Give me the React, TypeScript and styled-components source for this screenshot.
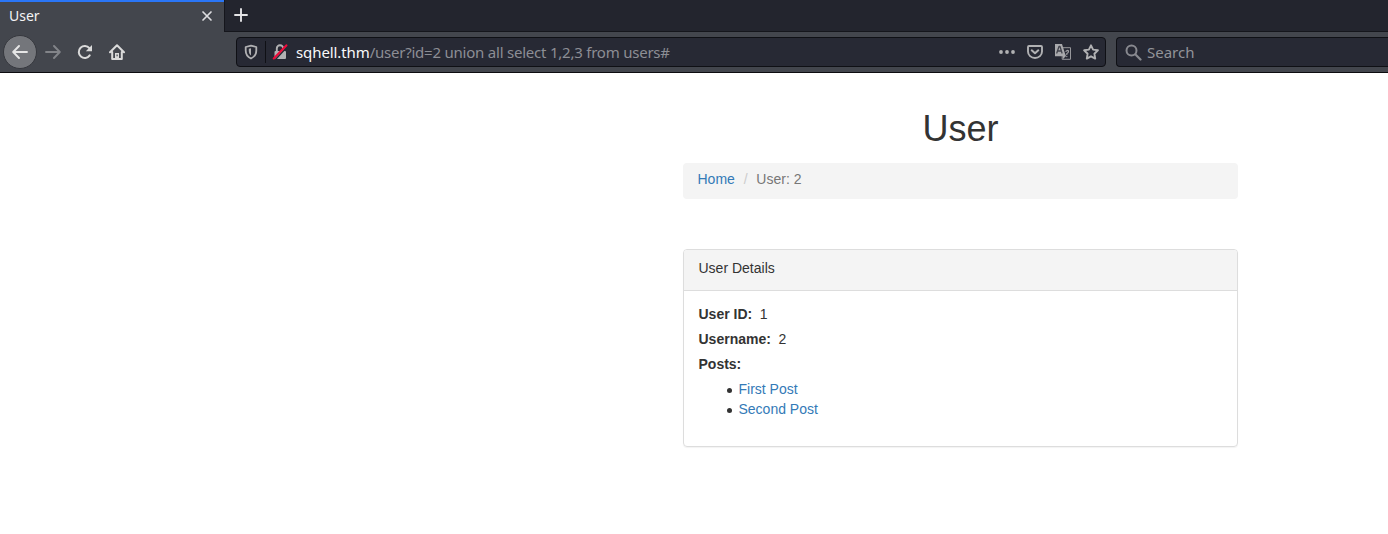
import React from "react";
import styled, { createGlobalStyle } from "styled-components";

const GlobalStyle = createGlobalStyle`
  * { box-sizing: border-box; }
  body { margin: 0; background: #fff; overflow: hidden; }
`;

const Window = styled.div`
  width: 100%;
  height: 534px;
  display: flex;
  flex-direction: column;
  background: #fff;
`;

const TabStrip = styled.div`
  height: 32px;
  flex: none;
  display: flex;
  background: #23252e;
  font-family: "Noto Sans", sans-serif;
`;

const Tab = styled.div`
  width: 224px;
  height: 32px;
  display: flex;
  align-items: center;
  justify-content: space-between;
  padding: 0 11px 2px 9px;
  border-top: 2px solid #2a76f6;
  background: #43464d;
  color: #f4f4f5;
  font-size: 14px;
  line-height: 28px;
`;

const NewTab = styled.div`
  flex: 1;
  display: flex;
  align-items: flex-start;
  padding: 8px 0 0 9px;
  border-left: 1px solid #15161c;
  border-bottom: 1px solid #15161c;
`;

const Toolbar = styled.div`
  height: 41px;
  flex: none;
  display: flex;
  align-items: flex-start;
  background: #43464d;
  border-bottom: 1px solid #0c0c0f;
  font-family: "Noto Sans", sans-serif;
  font-size: 15px;
`;

const NavButtons = styled.div`
  width: 236px;
  height: 40px;
  display: flex;
  align-items: center;
  padding-left: 3px;
`;

const NavButton = styled.div<{ $round?: boolean }>`
  width: ${(p) => (p.$round ? 34 : 32)}px;
  height: ${(p) => (p.$round ? 34 : 32)}px;
  display: flex;
  align-items: center;
  justify-content: center;
  border-radius: 50%;
  border: 1px solid ${(p) => (p.$round ? "#36383e" : "transparent")};
  background: ${(p) => (p.$round ? "#74767b" : "transparent")};
`;

const Field = styled.div`
  height: 30px;
  margin-top: 5px;
  display: flex;
  align-items: center;
  border: 1px solid #0f1015;
  border-radius: 4px;
  background: #272934;
`;

const UrlField = styled(Field)`
  width: 870px;
  padding: 0 6px 0 6px;
`;

const SearchField = styled(Field)`
  flex: 1;
  margin-left: 10px;
  padding-left: 8px;
  gap: 5px;
  border-right: 0;
  border-radius: 4px 0 0 4px;
  color: #929399;
`;

const Divider = styled.div`
  width: 1px;
  height: 22px;
  margin: 0 6px 0 6px;
  background: #0f1015;
`;

const Url = styled.div`
  flex: 1;
  margin-left: 8px;
  color: #8d8e95;
  white-space: nowrap;
  line-height: 28px;
  letter-spacing: -0.225px;
`;

const Host = styled.span`
  color: #f9f9fa;
  letter-spacing: -0.1px;
`;

const UrlActions = styled.div`
  display: flex;
  gap: 12px;
`;

const Page = styled.main`
  width: 555px;
  margin-left: 683px;
  color: #333;
  font-family: "Liberation Sans", Arial, sans-serif;
  font-size: 14px;
  line-height: 20px;
`;

const Title = styled.h1`
  margin: 36px 0 15px;
  text-align: center;
  font-size: 36px;
  font-weight: 400;
  line-height: 39px;
`;

const Breadcrumb = styled.nav`
  height: 36px;
  padding: 6px 14.5px;
  margin-bottom: 50px;
  display: flex;
  border-radius: 4px;
  background: #f4f4f4;
  color: #777;
`;

const Slash = styled.span`
  width: 21.5px;
  text-align: center;
  color: #ccc;
`;

const Link = styled.a`
  color: #337ab7;
`;

const Panel = styled.section`
  height: 198px;
  border: 1px solid #ddd;
  border-radius: 4px;
  box-shadow: 0 1px 1px rgba(0, 0, 0, 0.05);
`;

const PanelHeading = styled.div`
  height: 41px;
  padding: 8px 14.5px;
  border-bottom: 1px solid #ddd;
  border-radius: 3px 3px 0 0;
  background: #f4f4f4;
`;

const PanelBody = styled.div`
  padding: 13px 14.5px;
`;

const Detail = styled.div`
  margin-bottom: 5px;
`;

const Label = styled.b`
  margin-right: 7.5px;
`;

const PostList = styled.ul`
  margin: 0;
  padding-left: 28px;
  list-style: none;
`;

const Post = styled.li`
  display: flex;
  align-items: center;
  gap: 7px;

  &::before {
    content: "";
    width: 5px;
    height: 5px;
    margin-top: 3px;
    border-radius: 50%;
    background: #333;
  }
`;

type IconProps = { color?: string };
const stroke = (color: string, width = 2) => ({
  fill: "none",
  stroke: color,
  strokeWidth: width,
  strokeLinecap: "round" as const,
  strokeLinejoin: "round" as const,
});

const CloseIcon = () => (
  <svg width="12" height="12" viewBox="0 0 12 12"><path d="M2 2l8 8M10 2l-8 8" {...stroke("#dddde0", 1.7)} /></svg>
);
const PlusIcon = () => (
  <svg width="14" height="14" viewBox="0 0 14 14"><path d="M7 1v12M1 7h12" {...stroke("#e4e4e6", 1.9)} /></svg>
);
const ArrowIcon = ({ color = "#e6e6e6" }: IconProps) => (
  <svg width="16" height="16" viewBox="0 0 16 16"><path d="M15 8H1.500M7 2L1.200 8L7 14" {...stroke(color, 1.9)} /></svg>
);
const ForwardIcon = () => (
  <svg width="16" height="16" viewBox="0 0 16 16"><path d="M1 8h13.500M9 2l5.800 6L9 14" {...stroke("#828489", 1.9)} /></svg>
);
const ReloadIcon = () => (
  <svg width="16" height="16" viewBox="0 0 16 16">
    <path d="M12.700 11.400A6 6 0 1 1 12.400 4.100" {...stroke("#dadada", 2)} />
    <path d="M15 1v6.300H8.800z" fill="#dadada" />
  </svg>
);
const HomeIcon = () => (
  <svg width="16" height="16" viewBox="0 0 16 16">
    <path d="M1 8.300L8 1.300l7 7M3.200 8v6.900h9.600V8" {...stroke("#dadada", 2)} />
    <path d="M6 9h4v6H6z" fill="#dadada" /><path d="M7.500 10.500h1.200v1.800H7.500z" fill="#43464d" />
  </svg>
);
const ShieldIcon = () => (
  <svg width="16" height="16" viewBox="0 0 16 16">
    <path d="M8 1.700L13.300 3v3.500c0 4-2 6.500-5.300 8-3.300-1.500-5.300-4-5.300-8V3z" {...stroke("#b1b1b3", 1.8)} />
    <path d="M8 4.200v7.300c-1.500-1.200-2.200-2.700-2.200-5V4.800z" fill="#b1b1b3" />
  </svg>
);
const InsecureIcon = () => (
  <svg width="16" height="16" viewBox="0 0 16 16">
    <rect x="2.500" y="7" width="11.500" height="8" rx="1" fill="#b1b1b3" />
    <path d="M4.800 7V4.500a3.200 3.200 0 0 1 6.400 0V7" {...stroke("#b1b1b3", 1.9)} />
    <path d="M3 16L15 3" {...stroke("#272934", 1.5)} />
    <path d="M1.800 14.400L14.300 1.400" {...stroke("#ed0b3a", 2.200)} />
  </svg>
);
const MoreIcon = () => (
  <svg width="16" height="16" viewBox="0 0 16 16" fill="#b1b1b3"><circle cx="2" cy="8" r="1.900" /><circle cx="8" cy="8" r="1.900" /><circle cx="14" cy="8" r="1.900" /></svg>
);
const PocketIcon = () => (
  <svg width="16" height="16" viewBox="0 0 16 16">
    <path d="M2 2h12a1 1 0 0 1 1 1v4.500a7 6.500 0 0 1-14 0V3a1 1 0 0 1 1-1z" {...stroke("#b1b1b3", 1.900)} />
    <path d="M4.700 6.300L8 9.300l3.300-3" {...stroke("#b1b1b3", 2)} />
  </svg>
);
const TranslateIcon = () => (
  <svg width="16" height="16" viewBox="0 0 16 16">
    <path d="M8 3.700h7.500v11.600H7.200V12" {...stroke("#97979b", 1)} />
    <path d="M0 0h7l3 9.500 1 2.500-3 3v-2.800H0z" fill="#a9a9ac" />
    <path d="M1.800 9L4 2.500h1L7 9M2.800 7h3.500" {...stroke("#42434c", 1.3)} />
    <path d="M11 7.300q2.500-1.800 2.500 0t-1.700 2.200v1M11.800 12.300v.3" {...stroke("#a1a1a5", 1.2)} />
  </svg>
);
const StarIcon = () => (
  <svg width="16" height="16" viewBox="0 0 16 16"><path d="M8 1.300l2.100 4.300 4.800.7-3.500 3.400.8 4.900L8 12.300l-4.200 2.300.8-4.900L1.100 6.300l4.800-.7z" {...stroke("#b1b1b3", 1.9)} /></svg>
);
const SearchIcon = () => (
  <svg width="17" height="17" viewBox="0 0 17 17"><circle cx="6.500" cy="6.500" r="5" {...stroke("#88898f", 2)} /><path d="M10.500 10.500l5 5" {...stroke("#88898f", 2.200)} /></svg>
);

export default function App() {
  return (
    <Window>
      <GlobalStyle />
      <TabStrip>
        <Tab><span>User</span><CloseIcon /></Tab>
        <NewTab><PlusIcon /></NewTab>
      </TabStrip>
      <Toolbar>
        <NavButtons>
          <NavButton $round><ArrowIcon /></NavButton>
          <NavButton><ForwardIcon /></NavButton>
          <NavButton><ReloadIcon /></NavButton>
          <NavButton><HomeIcon /></NavButton>
        </NavButtons>
        <UrlField>
          <ShieldIcon />
          <Divider />
          <InsecureIcon />
          <Url><Host>sqhell.thm</Host>/user?id=2 union all select 1,2,3 from users#</Url>
          <UrlActions><MoreIcon /><PocketIcon /><TranslateIcon /><StarIcon /></UrlActions>
        </UrlField>
        <SearchField><SearchIcon />Search</SearchField>
      </Toolbar>
      <Page>
        <Title>User</Title>
        <Breadcrumb><Link>Home</Link><Slash>/</Slash>User: 2</Breadcrumb>
        <Panel>
          <PanelHeading>User Details</PanelHeading>
          <PanelBody>
            <Detail><Label>User ID:</Label>1</Detail>
            <Detail><Label>Username:</Label>2</Detail>
            <Detail><Label>Posts:</Label></Detail>
            <PostList>
              <Post><Link>First Post</Link></Post>
              <Post><Link>Second Post</Link></Post>
            </PostList>
          </PanelBody>
        </Panel>
      </Page>
    </Window>
  );
}
